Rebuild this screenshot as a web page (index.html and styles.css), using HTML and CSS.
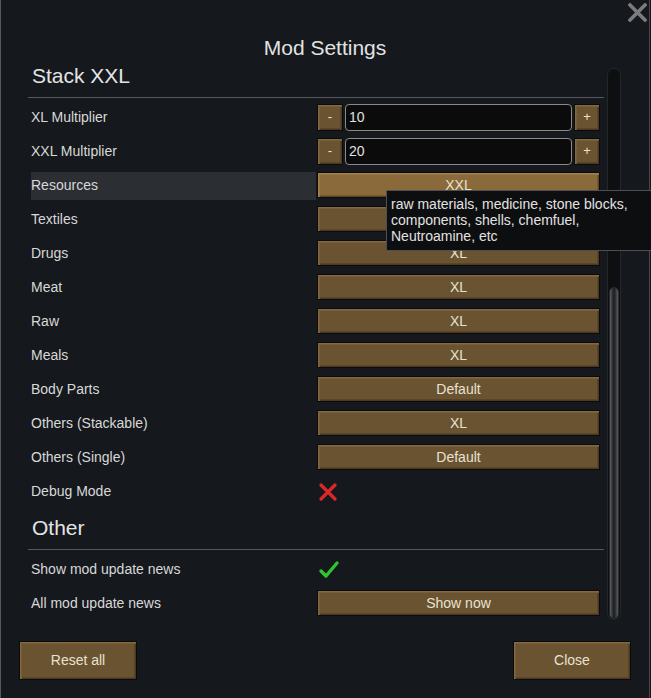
FILE: index.html
```html
<!DOCTYPE html>
<html>
<head>
<meta charset="utf-8">
<link rel="stylesheet" href="styles.css">
</head>
<body>
<div class="window">
  <div class="close-x">
    <svg width="19" height="19" viewBox="0 0 19 19"><path d="M2 2 L17 17 M17 2 L2 17" stroke="#7c7c7c" stroke-width="3.6" stroke-linecap="square"/></svg>
  </div>
  <div class="title">Mod Settings</div>
  <div class="body">
    <div class="list">
      <div class="section">Stack XXL</div>
      <div class="row"><div class="label">XL Multiplier</div><div class="ctrl stepper"><div class="btn small">-</div><div class="field">10</div><div class="btn small">+</div></div></div>
      <div class="row"><div class="label">XXL Multiplier</div><div class="ctrl stepper"><div class="btn small">-</div><div class="field">20</div><div class="btn small">+</div></div></div>
      <div class="row"><div class="label hl">Resources</div><div class="ctrl"><div class="btn wide hover">XXL</div></div></div>
      <div class="row"><div class="label">Textiles</div><div class="ctrl"><div class="btn wide">XL</div></div></div>
      <div class="row"><div class="label">Drugs</div><div class="ctrl"><div class="btn wide">XL</div></div></div>
      <div class="row"><div class="label">Meat</div><div class="ctrl"><div class="btn wide">XL</div></div></div>
      <div class="row"><div class="label">Raw</div><div class="ctrl"><div class="btn wide">XL</div></div></div>
      <div class="row"><div class="label">Meals</div><div class="ctrl"><div class="btn wide">XL</div></div></div>
      <div class="row"><div class="label">Body Parts</div><div class="ctrl"><div class="btn wide">Default</div></div></div>
      <div class="row"><div class="label">Others (Stackable)</div><div class="ctrl"><div class="btn wide">XL</div></div></div>
      <div class="row"><div class="label">Others (Single)</div><div class="ctrl"><div class="btn wide">Default</div></div></div>
      <div class="row"><div class="label">Debug Mode</div><div class="ctrl icon">
        <svg width="20" height="20" viewBox="0 0 20 20"><path d="M3 3 L17 17 M17 3 L3 17" stroke="#d8282a" stroke-width="3.4" stroke-linecap="round"/></svg>
      </div></div>
      <div class="section other">Other</div>
      <div class="row"><div class="label">Show mod update news</div><div class="ctrl icon">
        <svg width="22" height="20" viewBox="0 0 22 20"><path d="M3 11 L8 16 L19 3" fill="none" stroke="#2fc42f" stroke-width="3.4" stroke-linecap="round" stroke-linejoin="round"/></svg>
      </div></div>
      <div class="row"><div class="label">All mod update news</div><div class="ctrl"><div class="btn wide">Show now</div></div></div>
    </div>
    <div class="scrollbar"><div class="thumb"></div></div>
  </div>
  <div class="footer">
    <div class="btn big">Reset all</div>
    <div class="btn big">Close</div>
  </div>
  <div class="tooltip">raw materials, medicine, stone blocks,<br>components, shells, chemfuel,<br>Neutroamine, etc</div>
</div>
</body>
</html>
```

FILE: styles.css
```css
html, body {
  margin: 0;
  padding: 0;
  background: #15181d;
  overflow: hidden;
}
body {
  width: 651px;
  height: 698px;
  font-family: "Liberation Sans", Arial, sans-serif;
  color: #dcdcdc;
}
.window {
  position: relative;
  width: 650px;
  height: 698px;
  box-sizing: border-box;
  border-left: 1px solid #55585d;
  border-right: 1px solid #44474c;
  background: #15181d;
}
.close-x {
  position: absolute;
  top: 3px;
  right: 2px;
  width: 19px;
  height: 19px;
}
.close-x svg { display: block; }
.title {
  padding-top: 34px;
  height: 28px;
  line-height: 28px;
  text-align: center;
  font-size: 21px;
  color: #e2e2e2;
}
.body {
  display: flex;
  align-items: flex-start;
}
.list {
  margin-left: 27px;
  width: 576px;
}
.section {
  height: 35px;
  line-height: 28px;
  padding-left: 4px;
  font-size: 21px;
  color: #e4e4e4;
  border-bottom: 1px solid #55585c;
  margin-bottom: 2px;
}
.section.other {
  margin-top: 6px;
}
.row {
  display: grid;
  grid-template-columns: 285px 283px;
  column-gap: 1px;
  height: 34px;
  box-sizing: border-box;
  padding: 4px 0 0 3px;
}
.label {
  height: 28px;
  line-height: 26px;
  font-size: 14px;
  color: #d8d8d8;
}
.label.hl {
  background: #2b2e33;
}
.ctrl {
  display: flex;
  height: 27px;
}
.ctrl.icon {
  align-items: center;
  padding-left: 1px;
}
.ctrl.icon svg { display: block; }
.stepper {
  gap: 2px;
}
.btn {
  box-sizing: border-box;
  background: #6a5331;
  border: 1px solid #0b0b0b;
  box-shadow: inset 1px 1px 0 #85683e, inset 2px 2px 0 #775d37, inset -1px -1px 0 #4b3a21, inset -2px -2px 0 #5a4529;
  color: #e8e2d2;
  font-size: 14px;
  text-align: center;
}
.btn.wide {
  width: 283px;
  height: 26px;
  line-height: 24px;
}
.btn.hover {
  background: #8a6a3a;
  box-shadow: inset 1px 1px 0 #a5824d, inset 2px 2px 0 #977545, inset -1px -1px 0 #5f4826, inset -2px -2px 0 #735830;
}
.btn.small {
  width: 26px;
  height: 27px;
  line-height: 24px;
  font-size: 13px;
  flex: none;
}
.field {
  flex: 1;
  box-sizing: border-box;
  height: 27px;
  background: #0b0b0c;
  border: 1px solid #8a8a8a;
  border-radius: 4px;
  font-size: 14px;
  line-height: 25px;
  padding-left: 3px;
  color: #e0e0e0;
}
.scrollbar {
  margin-top: 6px;
  margin-left: 3px;
  width: 14px;
  height: 552px;
  box-sizing: border-box;
  background: #0e0f11;
  border: 1px solid #23262b;
  border-radius: 7px;
  display: flex;
  flex-direction: column;
  justify-content: flex-end;
  align-items: center;
}
.thumb {
  width: 10px;
  height: 332px;
  box-sizing: border-box;
  border-radius: 5px;
  border: 1px solid #2a2b2d;
  background: linear-gradient(to right, #5c5d60, #2a2b2d 35%, #1c1d1f 50%, #2a2b2d 65%, #5c5d60);
}
.footer {
  display: flex;
  justify-content: space-between;
  margin-top: 21px;
  padding: 0 18px 0 18px;
}
.btn.big {
  width: 118px;
  height: 39px;
  line-height: 37px;
  font-size: 14px;
}
.tooltip {
  position: absolute;
  left: 385px;
  top: 190px;
  width: 290px;
  height: 61px;
  box-sizing: border-box;
  background: #0d0e10;
  border: 1px solid #4d4f53;
  padding: 5px 0 0 4px;
  font-size: 14px;
  line-height: 16px;
  color: #e2e2e2;
}
```
